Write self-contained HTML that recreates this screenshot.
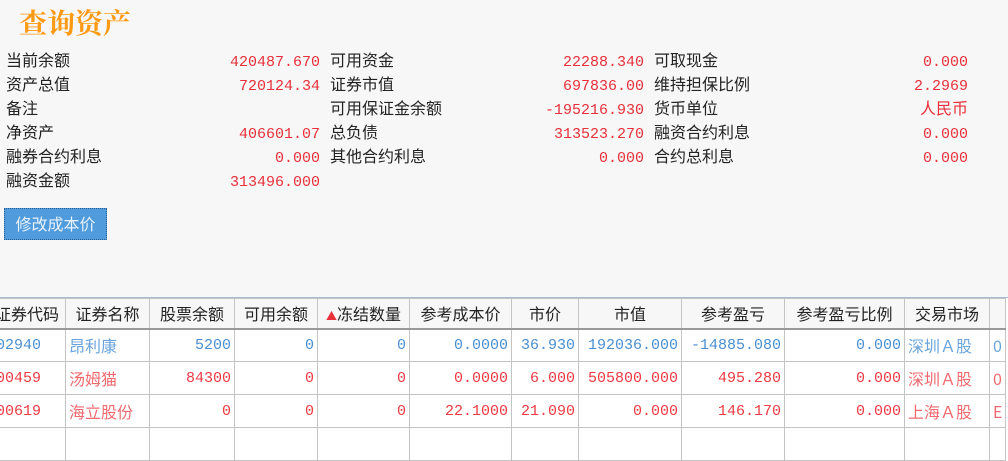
<!DOCTYPE html>
<html><head><meta charset="utf-8"><style>
*{margin:0;padding:0;box-sizing:border-box}
body{width:1008px;height:457px;overflow:hidden;background:#fff;font-family:"Liberation Sans","Noto Sans CJK SC",sans-serif;position:relative}
.top{position:absolute;left:0;top:0;width:1008px;height:298px;background:#f7f7f7;border-bottom:1px solid #a8bcd0}
.title{position:absolute;left:19px;top:2px;font-size:28px;color:#ff9a14;font-family:"Noto Serif CJK SC",serif;font-weight:bold}
.l{position:absolute;font-size:16px;color:#222;height:24px;line-height:24px;font-family:"Noto Sans CJK SC",sans-serif;margin-top:-4px}
.v{position:absolute;font-size:15px;color:#e8303a;height:24px;line-height:24px;font-family:"Liberation Mono",monospace;text-align:right;width:200px}
.btn{position:absolute;left:4px;top:208px;width:103px;height:32px;background:#4f9bdc;border:1px dotted #2b5f90;color:#e8f2fc;font-size:16px;line-height:29px;text-align:center;font-family:"Noto Sans CJK SC",sans-serif}
table{position:absolute;left:-20px;top:298px;border-collapse:collapse;table-layout:fixed;width:1055px}
td,th{border:1px solid #c4c4c4;height:33px;font-size:15px;white-space:nowrap;overflow:hidden;padding:0 3px;font-family:"Liberation Mono","Noto Sans CJK SC",monospace}
th{background:#f7f7f7;font-weight:normal;color:#222;height:30px;font-family:"Noto Sans CJK SC",sans-serif;font-size:16px;border-bottom:2px solid #999;text-align:center;padding:0 1px}
td{text-align:right}
td.c{text-align:left;padding-left:6px}
.b td{color:#4a8fd0}.r td{color:#ee3a44}
td.n{text-align:left;font-family:"Noto Sans CJK SC",sans-serif;font-size:16px}
.b td.n{color:#6aa4dc}.r td.n{color:#f06a70}
</style></head><body>
<div class="top">
<div class="title">查询资产</div>
<div class="l" style="left:6px;top:51px">当前余额</div><div class="v" style="left:120px;top:51px">420487.670</div>
<div class="l" style="left:6px;top:75px">资产总值</div><div class="v" style="left:120px;top:75px">720124.34</div>
<div class="l" style="left:6px;top:99px">备注</div>
<div class="l" style="left:6px;top:123px">净资产</div><div class="v" style="left:120px;top:123px">406601.07</div>
<div class="l" style="left:6px;top:147px">融券合约利息</div><div class="v" style="left:120px;top:147px">0.000</div>
<div class="l" style="left:6px;top:171px">融资金额</div><div class="v" style="left:120px;top:171px">313496.000</div>
<div class="l" style="left:330px;top:51px">可用资金</div><div class="v" style="left:444px;top:51px">22288.340</div>
<div class="l" style="left:330px;top:75px">证券市值</div><div class="v" style="left:444px;top:75px">697836.00</div>
<div class="l" style="left:330px;top:99px">可用保证金余额</div><div class="v" style="left:444px;top:99px">-195216.930</div>
<div class="l" style="left:330px;top:123px">总负债</div><div class="v" style="left:444px;top:123px">313523.270</div>
<div class="l" style="left:330px;top:147px">其他合约利息</div><div class="v" style="left:444px;top:147px">0.000</div>
<div class="l" style="left:654px;top:51px">可取现金</div><div class="v" style="left:768px;top:51px">0.000</div>
<div class="l" style="left:654px;top:75px">维持担保比例</div><div class="v" style="left:768px;top:75px">2.2969</div>
<div class="l" style="left:654px;top:99px">货币单位</div><div class="v" style="left:768px;top:99px;margin-top:-4px;font-family:'Noto Sans CJK SC',sans-serif;font-size:16px">人民币</div>
<div class="l" style="left:654px;top:123px">融资合约利息</div><div class="v" style="left:768px;top:123px">0.000</div>
<div class="l" style="left:654px;top:147px">合约总利息</div><div class="v" style="left:768px;top:147px">0.000</div>
<div class="btn">修改成本价</div>
</div>
<table>
<colgroup><col style="width:85px"><col style="width:84px"><col style="width:85px"><col style="width:83px"><col style="width:92px"><col style="width:102px"><col style="width:67px"><col style="width:103px"><col style="width:103px"><col style="width:120px"><col style="width:85px"><col style="width:16px"><col style="width:30px"></colgroup>
<tr><th style="text-align:right;padding-right:6px">证券代码</th><th>证券名称</th><th>股票余额</th><th>可用余额</th><th><span style="color:#e8303a;font-size:11px">▲</span>冻结数量</th><th>参考成本价</th><th>市价</th><th>市值</th><th>参考盈亏</th><th>参考盈亏比例</th><th>交易市场</th><th></th><th style="border:none;background:#fff"></th></tr>
<tr class="b"><td class="c">002940</td><td class="n">昂利康</td><td>5200</td><td>0</td><td>0</td><td>0.0000</td><td>36.930</td><td>192036.000</td><td>-14885.080</td><td>0.000</td><td class="n">深圳Ａ股</td><td class="n">0</td><td style="border:none"></td></tr>
<tr class="r"><td class="c">300459</td><td class="n">汤姆猫</td><td>84300</td><td>0</td><td>0</td><td>0.0000</td><td>6.000</td><td>505800.000</td><td>495.280</td><td>0.000</td><td class="n">深圳Ａ股</td><td class="n">0</td><td style="border:none"></td></tr>
<tr class="r"><td class="c">600619</td><td class="n">海立股份</td><td>0</td><td>0</td><td>0</td><td>22.1000</td><td>21.090</td><td>0.000</td><td>146.170</td><td>0.000</td><td class="n">上海Ａ股</td><td class="n">E</td><td style="border:none"></td></tr>
<tr><td></td><td></td><td></td><td></td><td></td><td></td><td></td><td></td><td></td><td></td><td></td><td></td><td style="border:none"></td></tr>
</table>
</body></html>
